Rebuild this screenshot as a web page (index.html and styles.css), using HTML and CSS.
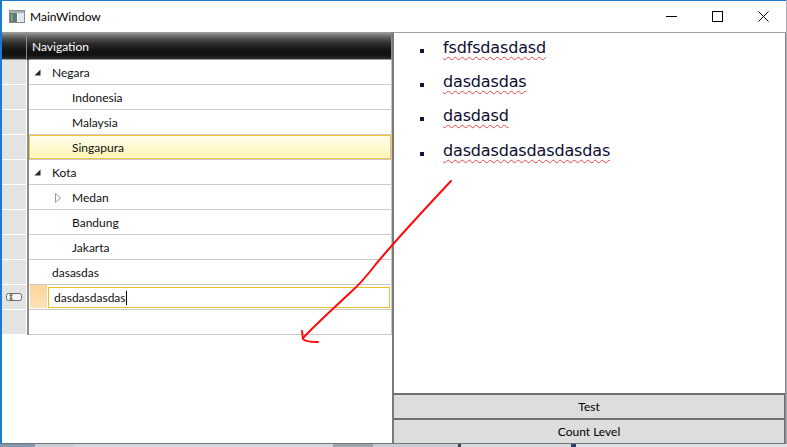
FILE: index.html
```html
<!DOCTYPE html>
<html>
<head>
<meta charset="utf-8">
<title>MainWindow</title>
<link rel="stylesheet" href="styles.css">
</head>
<body>
<div class="window">
  <div class="titlebar">
    <svg class="app-icon" width="16" height="13" viewBox="0 0 16 13">
      <rect x="0.5" y="0.5" width="15" height="12" fill="#dfe7ee" stroke="#8a8a8a"/>
      <rect x="1" y="1" width="14" height="2" fill="#a9b0b6"/>
      <rect x="1" y="3" width="7" height="9" fill="#5d7b70"/>
      <rect x="8" y="3" width="1" height="9" fill="#ffffff"/>
      <rect x="2" y="4" width="2" height="7" fill="#7e9c90"/>
    </svg>
    <span class="title">MainWindow</span>
    <div class="controls">
      <div class="ctl"><svg width="11" height="11" viewBox="0 0 11 11"><line x1="0" y1="5.5" x2="11" y2="5.5" stroke="#000" stroke-width="1"/></svg></div>
      <div class="ctl"><svg width="11" height="11" viewBox="0 0 11 11"><rect x="0.5" y="0.5" width="10" height="10" fill="none" stroke="#000" stroke-width="1"/></svg></div>
      <div class="ctl"><svg width="11" height="11" viewBox="0 0 11 11"><path d="M0.5 0.5 L10.5 10.5 M10.5 0.5 L0.5 10.5" stroke="#000" stroke-width="1" fill="none"/></svg></div>
    </div>
  </div>
  <div class="content">
    <div class="left">
      <div class="row grid-head">
        <div class="rh"></div><div class="sep"></div><div class="cell">Navigation</div>
      </div>
      <div class="row">
        <div class="rh"></div><div class="sep"></div>
        <div class="cell"><span class="exp"><svg width="7" height="7" viewBox="0 0 7 7"><polygon points="6.5,0.5 6.5,6.5 0.5,6.5" fill="#262626"/></svg></span>Negara</div>
      </div>
      <div class="row">
        <div class="rh"></div><div class="sep"></div>
        <div class="cell"><span class="ind"></span><span class="exp"></span>Indonesia</div>
      </div>
      <div class="row">
        <div class="rh"></div><div class="sep"></div>
        <div class="cell"><span class="ind"></span><span class="exp"></span>Malaysia</div>
      </div>
      <div class="row">
        <div class="rh"></div><div class="sep"></div>
        <div class="cell sel"><span class="ind"></span><span class="exp"></span>Singapura</div>
      </div>
      <div class="row">
        <div class="rh"></div><div class="sep"></div>
        <div class="cell"><span class="exp"><svg width="7" height="7" viewBox="0 0 7 7"><polygon points="6.5,0.5 6.5,6.5 0.5,6.5" fill="#262626"/></svg></span>Kota</div>
      </div>
      <div class="row">
        <div class="rh"></div><div class="sep"></div>
        <div class="cell"><span class="ind"></span><span class="exp exp-c"><svg width="6" height="10" viewBox="0 0 6 10"><polygon points="0.5,0.5 5.5,5 0.5,9.5" fill="#fff" stroke="#9a9a9a"/></svg></span>Medan</div>
      </div>
      <div class="row">
        <div class="rh"></div><div class="sep"></div>
        <div class="cell"><span class="ind"></span><span class="exp"></span>Bandung</div>
      </div>
      <div class="row">
        <div class="rh"></div><div class="sep"></div>
        <div class="cell"><span class="ind"></span><span class="exp"></span>Jakarta</div>
      </div>
      <div class="row">
        <div class="rh"></div><div class="sep"></div>
        <div class="cell"><span class="exp"></span>dasasdas</div>
      </div>
      <div class="row">
        <div class="rh rh-edit"><svg width="16" height="8" viewBox="0 0 16 8"><rect x="0.5" y="0.5" width="15" height="7" rx="2" fill="#f4f4f4" stroke="#6a6a6a"/><path d="M3.5 2 H6.5 M5 2 V6 M3.5 6 H6.5" stroke="#333" stroke-width="1" fill="none"/></svg></div>
        <div class="sep"></div>
        <div class="cell edit">
          <div class="curcell"></div>
          <div class="tb">dasdasdasdas<span class="caret"></span></div>
        </div>
      </div>
      <div class="row">
        <div class="rh"></div><div class="sep"></div>
        <div class="cell"></div>
      </div>
    </div>
    <div class="right">
      <ul class="items">
        <li><span class="b"></span><span class="t">fsdfsdasdasd</span></li>
        <li><span class="b"></span><span class="t">dasdasdas</span></li>
        <li><span class="b"></span><span class="t">dasdasd</span></li>
        <li><span class="b"></span><span class="t">dasdasdasdasdasdas</span></li>
      </ul>
      <button class="btn">Test</button>
      <button class="btn">Count Level</button>
    </div>
  </div>
</div>
<div class="taskbar">
  <div class="tb1"></div>
  <div class="tb2"></div>
  <div class="tb3"></div>
  <div class="tb4"></div>
  <div class="tb5"></div>
  <div class="tb6"></div>
  <div class="tb7"></div>
</div>
<svg class="arrow" width="787" height="447" viewBox="0 0 787 447">
  <path d="M451 181 C420 214 396 240 376 264 C366 277 360 284 352 291 C336 306 318 322 303 338" fill="none" stroke="#ff0a0a" stroke-width="2" stroke-linecap="round"/>
  <path d="M302 331 L303 339 Q305 342 318 342" fill="none" stroke="#ff0a0a" stroke-width="2" stroke-linecap="round" stroke-linejoin="round"/>
</svg>
</body>
</html>
```

FILE: styles.css
```css
html, body {
  margin: 0;
  padding: 0;
}
body {
  width: 787px;
  height: 447px;
  overflow: hidden;
  position: relative;
  background: #a9adb2;
  font-family: Lato, "Liberation Sans", sans-serif;
}
.window {
  width: 786px;
  height: 444px;
  box-sizing: border-box;
  border-top: 1px solid #1b7bd3;
  border-left: 2px solid #1b7bd3;
  border-bottom: 1px solid #6f7780;
  background: #ffffff;
  display: flex;
  flex-direction: column;
}
.titlebar {
  height: 31px;
  flex-shrink: 0;
  display: flex;
  align-items: center;
}
.app-icon {
  margin-left: 7px;
  display: block;
}
.title {
  margin-left: 5px;
  font-size: 12px;
  color: #000;
}
.controls {
  margin-left: auto;
  display: flex;
  height: 100%;
}
.ctl {
  width: 46px;
  display: flex;
  align-items: center;
  justify-content: center;
}
.ctl svg {
  display: block;
}
.content {
  flex: 1;
  display: flex;
  min-height: 0;
}
.left {
  width: 390px;
  flex-shrink: 0;
}
.row {
  display: flex;
  height: 25px;
}
.rh {
  width: 25px;
  box-sizing: border-box;
  background: #e3e3e3;
  border-right: 1px solid #ffffff;
  border-bottom: 1px solid #ffffff;
  display: flex;
  align-items: center;
  justify-content: center;
}
.sep {
  width: 2px;
  background: #8c8c8c;
}
.cell {
  flex: 1;
  box-sizing: border-box;
  border-bottom: 1px solid #cacaca;
  border-right: 1px solid #cacaca;
  display: flex;
  align-items: center;
  padding-left: 5px;
  font-size: 12px;
  color: #101010;
  white-space: nowrap;
}
.grid-head {
  height: 28px;
}
.grid-head .rh,
.grid-head .sep,
.grid-head .cell {
  background: linear-gradient(to bottom, #a2a2a2 0px, #7a7a7a 3px, #4e4e4e 7px, #2a2a2a 12px, #151515 18px, #111111 23px, #2e2e2e 27px, #2e2e2e 28px);
}
.grid-head .rh {
  border-right: 1px solid #8a8a8a;
  border-bottom: 1px solid #9a9a9a;
}
.grid-head .cell {
  color: #ffffff;
  padding-left: 3px;
  border-bottom: 1px solid #9a9a9a;
  border-right: 1px solid #8a8a8a;
  padding-top: 1px;
}
.ind {
  width: 20px;
  flex-shrink: 0;
}
.exp {
  width: 18px;
  flex-shrink: 0;
  display: flex;
  align-items: center;
  padding-top: 1px;
}
.exp svg {
  display: block;
}
.exp-c {
  padding-left: 1px;
  width: 17px;
}
.sel {
  background: linear-gradient(to bottom, #fffef2, #fff4b0);
  box-shadow: inset 0 0 0 1px #f2c13a, inset 0 0 0 2px #fffbe2;
}
.rh-edit svg {
  display: block;
}
.cell.edit {
  align-items: flex-start;
  padding-left: 1px;
}
.curcell {
  width: 17px;
  height: 23px;
  background: linear-gradient(to bottom, #fcd597, #fde2b6);
  flex-shrink: 0;
}
.tb {
  flex: 1;
  margin: 2px 1px 0 1px;
  height: 21px;
  box-sizing: border-box;
  border: 1px solid #f0bf30;
  display: flex;
  align-items: center;
  padding-left: 5px;
}
.caret {
  display: inline-block;
  width: 1px;
  height: 14px;
  background: #000;
}
.right {
  flex: 1;
  display: flex;
  flex-direction: column;
  border-top: 1px solid #a3a3a3;
  border-left: 2px solid #7a7a7a;
  border-right: 1px solid #8a8a8a;
  min-width: 0;
}
.items {
  flex: 1;
  margin: -2.5px 0 0 0;
  padding: 0;
  list-style: none;
  font-family: "DejaVu Sans", sans-serif;
  font-size: 16px;
  color: #0c0c30;
}
.items li {
  display: flex;
  align-items: baseline;
  line-height: 34.4px;
  height: 34.4px;
}
.b {
  display: inline-block;
  width: 4px;
  height: 4px;
  background: #141438;
  margin-left: 26px;
  margin-right: 19px;
}
.t {
  letter-spacing: -0.15px;
  text-decoration: underline wavy #e84545;
  text-decoration-thickness: 1px;
  text-underline-offset: 3px;
}
.btn {
  display: block;
  width: 100%;
  height: 25px;
  box-sizing: border-box;
  margin: 0;
  padding: 0;
  border: none;
  border-top: 2px solid #707070;
  border-right: 1px solid #707070;
  background: #dddddd;
  font-family: Lato, "Liberation Sans", sans-serif;
  font-size: 12px;
  color: #000;
  text-align: center;
}
.taskbar {
  height: 3px;
  display: flex;
}
.tb1 { width: 35px; background: #8497ab; }
.tb2 { width: 38px; background: #c9cdd2; }
.tb3 { width: 260px; background: #d3d6da; }
.tb4 { width: 40px; background: #9ea3a8; }
.tb5 { width: 85px; background: #c9ccd0; }
.tb6 { width: 110px; background: #d7d9dc; border-left: 3px solid #3a3f48; }
.tb7 { flex: 1; background: #dfe1e4; border-left: 5px solid #2a3f6a; }
.arrow {
  position: absolute;
  top: 0;
  left: 0;
  pointer-events: none;
}
```
